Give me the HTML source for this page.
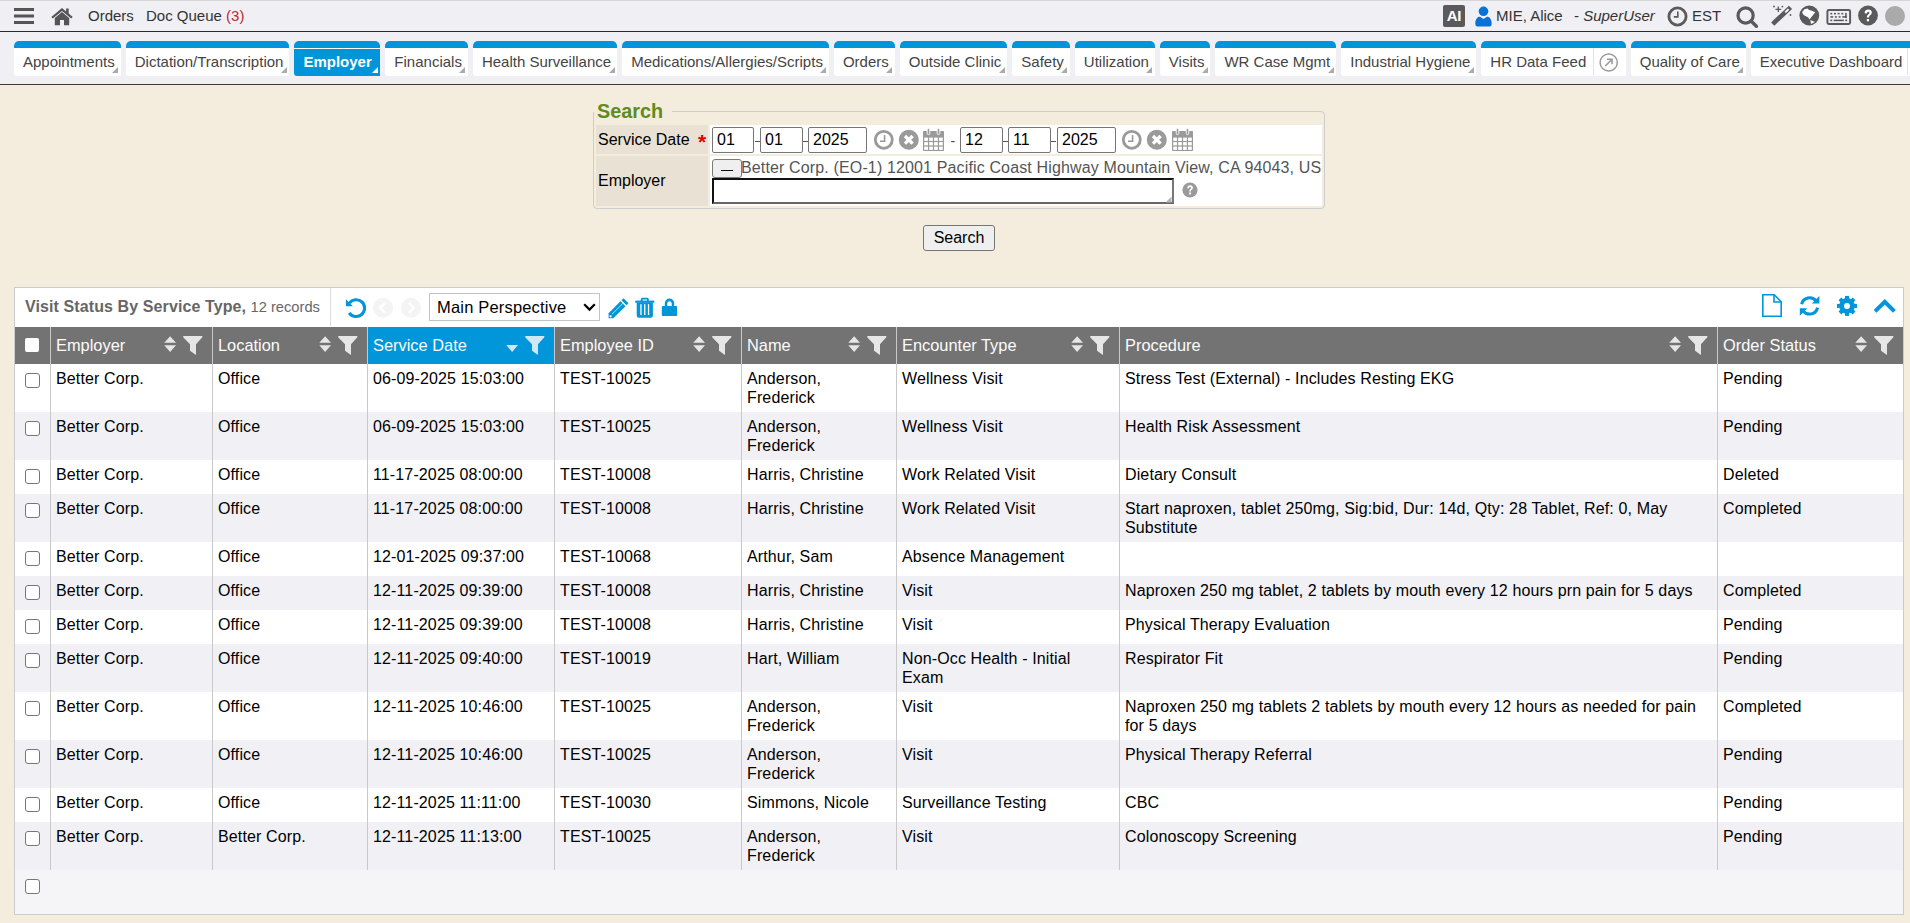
<!DOCTYPE html>
<html><head><meta charset="utf-8">
<style>
*{box-sizing:border-box}
html,body{margin:0;padding:0}
body{width:1910px;height:923px;overflow:hidden;position:relative;background:#f4ecdd;font-family:"Liberation Sans",sans-serif;color:#000}
.abs{position:absolute}
#topbar{position:absolute;left:0;top:0;width:1910px;height:32px;background:#efeff4;border-top:1px solid #d6d6d6;border-bottom:1px solid #2a2a2a}
#tabbar{position:absolute;left:0;top:32px;width:1910px;height:53px;background:#efeff4;border-bottom:1px solid #3a3a3a}
.tt{position:absolute;top:6px;font-size:15px;color:#333;white-space:nowrap;line-height:17px}
#tabs{position:absolute;left:14px;top:9px;display:flex;gap:5px;white-space:nowrap}
.tab{position:relative;height:35px;background:#fff;border-top:7px solid #0095d9;border-radius:5px 5px 0 3px;padding:0 6px 0 9px;font-size:15px;line-height:17px;color:#444;}
.tab{display:flex;align-items:flex-start}.tab>span{position:relative;top:5px;display:block}
.tab:after{content:"";position:absolute;right:2.5px;bottom:3px;width:0;height:0;border-left:6.5px solid transparent;border-bottom:6.5px solid #aaa}
.tab.act{background:#0095d9;color:#fff;font-weight:bold;padding-right:8.6px;box-shadow:inset 0 1px 0 #fff}
.tab.act:after{border-bottom-color:#fff}
.tab.noa:after{display:none}
.lbl{font-size:16px;line-height:19px;color:#000;white-space:nowrap}
.din{position:absolute;top:127px;height:26px;background:#fff;border:1px solid #767676;border-radius:2px;font-size:16px;line-height:24px;padding-left:4px}
.gtitle{font-size:16px;line-height:19px;color:#666;white-space:nowrap}
.hd{font-size:16.4px;line-height:19px;color:#fbfbfb;white-space:nowrap}
.cell{font-size:16px;line-height:19px;color:#000;white-space:nowrap;letter-spacing:0.13px}
.cb{width:15px;height:15px;border:1px solid #767676;border-radius:3px;background:#fff}
.dsh{position:absolute;top:130px;font-size:14px;line-height:19px;color:#aaa}
</style></head><body>
<div id="topbar">
  <svg class="abs" style="left:14px;top:7px" width="20" height="17" viewBox="0 0 20 17"><rect x="0" y="0" width="20" height="3" fill="#555"/><rect x="0" y="6.5" width="20" height="3" fill="#555"/><rect x="0" y="13" width="20" height="3" fill="#555"/></svg>
  <svg class="abs" style="left:50.5px;top:5.5px" width="22" height="19" viewBox="0 0 22 19"><path d="M11 1 L0.3 10 L1.8 11.6 L11 3.9 L20.2 11.6 L21.7 10 L17.7 6.6 L17.7 1.5 L15.1 1.5 L15.1 4.4 Z" fill="#555"/><path d="M3.8 11 L11 5 L18.2 11 L18.2 18.3 L13 18.3 L13 13 L9 13 L9 18.3 L3.8 18.3 Z" fill="#555"/></svg>
  <div class="tt" style="left:88px">Orders</div>
  <div class="tt" style="left:146px">Doc Queue <span style="color:#c62828">(3)</span></div>
  <div class="abs" style="left:1443px;top:4px;width:22px;height:22px;background:#5a5a5a;border-radius:2px;color:#fff;font-weight:bold;font-size:15px;line-height:22px;text-align:center;letter-spacing:-0.3px">AI</div>
  <svg class="abs" style="left:1475px;top:5px" width="17" height="21" viewBox="0 0 17 21"><circle cx="8.5" cy="5.3" r="4.8" fill="#0a72d6"/><path d="M0.3 18 C0.3 12.5 3 10.8 5 10.8 L8.5 13 L12 10.8 C14 10.8 16.7 12.5 16.7 18 Q16.7 20.5 14.5 20.5 L2.5 20.5 Q0.3 20.5 0.3 18 Z" fill="#0a72d6"/></svg>
  <div class="tt" style="left:1496px">MIE, Alice</div>
  <div class="tt" style="left:1574px">- <i>SuperUser</i></div>
  <svg class="abs" style="left:1667px;top:4.5px" width="21" height="21" viewBox="0 0 21 21"><circle cx="10.5" cy="10.5" r="8.6" fill="none" stroke="#5a5a5a" stroke-width="2.8"/><path d="M10.8 5.6 V10.9 H6.8" fill="none" stroke="#5a5a5a" stroke-width="1.6"/></svg>
  <div class="tt" style="left:1692px;top:5.5px">EST</div>
  <svg class="abs" style="left:1735.5px;top:5px" width="24" height="23" viewBox="0 0 24 23"><circle cx="9.6" cy="9.5" r="7.6" fill="none" stroke="#5a5a5a" stroke-width="3.2"/><path d="M15 15 L20.4 20.3" stroke="#5a5a5a" stroke-width="3.4" stroke-linecap="round"/></svg>
  <svg class="abs" style="left:1771px;top:3px" width="23" height="23" viewBox="0 0 23 23"><path d="M3.4 18.5 L17.8 4.9" stroke="#5a5a5a" stroke-width="4.6" stroke-linecap="square"/><path d="M14.3 8.4 L17.6 5.1" stroke="#fff" stroke-width="2"/><path d="M7.3 2.6 V8 M4.5 5.3 H10.1" stroke="#5a5a5a" stroke-width="1.3"/><circle cx="3" cy="2.5" r="0.9" fill="#5a5a5a"/><circle cx="11.4" cy="2.6" r="0.9" fill="#5a5a5a"/><circle cx="19.5" cy="11" r="0.9" fill="#5a5a5a"/></svg>
  <svg class="abs" style="left:1799px;top:4.3px" width="21" height="21" viewBox="0 0 21 21"><circle cx="10.3" cy="10.5" r="9.9" fill="#5a5a5a"/><path d="M3.2 7 L5.5 4.2 L8.5 3.5 L10 4.9 L12.2 5.5 L16.2 7.2 L14.5 9.4 L12.5 12 L10.4 14.6 L9.3 12.6 L7.5 11.4 L5 10.3 L3.7 8.8 Z" fill="#fff"/><path d="M11.4 15 L16 17 L12 19 Z" fill="#fff"/></svg>
  <svg class="abs" style="left:1826px;top:7.5px" width="26" height="17" viewBox="0 0 26 17.6"><rect x="1" y="1" width="23.5" height="14.5" rx="1.5" fill="none" stroke="#5a5a5a" stroke-width="2"/><g fill="#5a5a5a"><rect x="4" y="4" width="2" height="1.6"/><rect x="7.8" y="4" width="2" height="1.6"/><rect x="11.6" y="4" width="2" height="1.6"/><rect x="15.4" y="4" width="2" height="1.6"/><rect x="19.4" y="4" width="1.6" height="5.4"/><rect x="4" y="7.4" width="3" height="1.6"/><rect x="8.8" y="7.4" width="2" height="1.6"/><rect x="12.6" y="7.4" width="2" height="1.6"/><rect x="16.4" y="7.4" width="4.6" height="1.6"/><rect x="4" y="11" width="2" height="1.6"/><rect x="7.5" y="11" width="10.5" height="1.6"/><rect x="19.4" y="11" width="2" height="1.6"/></g></svg>
  <svg class="abs" style="left:1858px;top:4.3px" width="21" height="21" viewBox="0 0 21 21"><circle cx="10" cy="10.5" r="9.9" fill="#5a5a5a"/><path d="M6.6 8.2 Q6.6 4.6 10.2 4.6 Q13.8 4.6 13.8 7.8 Q13.8 9.6 11.8 10.6 Q11 11.1 11 12.6 L8.8 12.6 Q8.8 10.2 10.4 9.3 Q11.5 8.7 11.4 7.8 Q11.3 6.8 10.2 6.8 Q9 6.8 8.9 8.4 Z" fill="#fff"/><rect x="8.8" y="14" width="2.3" height="2.3" fill="#fff"/></svg>
  <div class="abs" style="left:1885px;top:5px;width:20px;height:20px;border-radius:50%;background:#aaaaaa"></div>
</div>
<div id="tabbar">
  <div id="tabs">
    <div class="tab"><span>Appointments</span></div>
    <div class="tab"><span>Dictation/Transcription</span></div>
    <div class="tab act"><span>Employer</span></div>
    <div class="tab"><span>Financials</span></div>
    <div class="tab"><span>Health Surveillance</span></div>
    <div class="tab"><span>Medications/Allergies/Scripts</span></div>
    <div class="tab"><span>Orders</span></div>
    <div class="tab"><span>Outside Clinic</span></div>
    <div class="tab"><span>Safety</span></div>
    <div class="tab"><span>Utilization</span></div>
    <div class="tab"><span>Visits</span></div>
    <div class="tab"><span>WR Case Mgmt</span></div>
    <div class="tab"><span>Industrial Hygiene</span></div>
    <div class="tab noa" style="padding-right:0"><span>HR Data Feed</span><span style="display:inline-block;width:1px;height:27px;background:#e3e3e3;vertical-align:top;top:0;margin-left:6.5px"></span><span style="display:inline-block;width:32px;position:relative;top:0;height:27px"><svg style="position:absolute;left:5px;top:4.5px" width="20" height="19" viewBox="0 0 20 19"><circle cx="9.7" cy="9.5" r="8.6" fill="none" stroke="#9a9a9a" stroke-width="1.5"/><path d="M6.3 13 L13 6.3 M8 6.3 H13 V11.3" fill="none" stroke="#9a9a9a" stroke-width="1.6"/></svg></span></div>
    <div class="tab"><span>Quality of Care</span></div>
    <div class="tab noa" style="padding-right:0"><span>Executive Dashboard</span><span style="display:inline-block;width:1px;height:27px;background:#e3e3e3;vertical-align:top;top:0;margin-left:5px"></span><span style="display:inline-block;width:33px"></span></div>
  </div>
</div>
<!-- search panel -->
<div class="abs" style="left:593px;top:111px;width:732px;height:98px;border:1px solid #cdcdcd;border-radius:0 4px 4px 4px"></div>
<div class="abs" style="left:592px;top:108px;width:80px;height:4px;background:#f4ecdd"></div>
<div class="abs" style="left:597px;top:99px;font-size:19.8px;font-weight:bold;color:#5f8b1f;line-height:24px">Search</div>
<div class="abs" style="left:596px;top:125px;width:112px;height:29px;background:#e9e2d4"></div>
<div class="abs" style="left:710px;top:125px;width:612px;height:29px;background:#fff"></div>
<div class="abs" style="left:596px;top:156px;width:112px;height:50px;background:#e9e2d4"></div>
<div class="abs" style="left:710px;top:156px;width:612px;height:50px;background:#fff"></div>
<div class="lbl abs" style="left:598px;top:130px">Service Date</div>
<div class="abs" style="left:698px;top:131px;color:#e00000;font-size:21px;font-weight:bold;line-height:21px">*</div>
<div class="lbl abs" style="left:598px;top:171px">Employer</div>
<div class="din" style="left:712px;width:42px">01</div>
<div class="abs" style="left:755px;top:141px;width:5px;height:1px;background:#5a5a5a"></div>
<div class="din" style="left:760px;width:43px">01</div>
<div class="abs" style="left:803px;top:141px;width:5px;height:1px;background:#5a5a5a"></div>
<div class="din" style="left:808px;width:59px">2025</div>
<svg class="abs" style="left:873px;top:129px" width="22" height="22" viewBox="0 0 22 22"><circle cx="10.8" cy="10.8" r="8.5" fill="none" stroke="#9a9a9a" stroke-width="2.8"/><path d="M11.6 6 V12.3 H7" fill="none" stroke="#9a9a9a" stroke-width="1.6"/></svg>
<svg class="abs" style="left:898px;top:129px" width="22" height="22" viewBox="0 0 22 22"><circle cx="10.8" cy="10.8" r="10" fill="#9a9a9a"/><path d="M7 7 L14.6 14.6 M14.6 7 L7 14.6" stroke="#fff" stroke-width="3.4"/></svg>
<svg class="abs" style="left:922px;top:128px" width="23" height="23" viewBox="0 0 23 23"><rect x="1" y="3" width="21" height="20" rx="0.8" fill="#9a9a9a"/><g fill="#fff"><rect x="2.2" y="9.6" width="3.75" height="3.3"/><rect x="2.2" y="14.1" width="3.75" height="3.3"/><rect x="2.2" y="18.6" width="3.75" height="3.3"/><rect x="7.15" y="9.6" width="3.75" height="3.3"/><rect x="7.15" y="14.1" width="3.75" height="3.3"/><rect x="7.15" y="18.6" width="3.75" height="3.3"/><rect x="12.1" y="9.6" width="3.75" height="3.3"/><rect x="12.1" y="14.1" width="3.75" height="3.3"/><rect x="12.1" y="18.6" width="3.75" height="3.3"/><rect x="17.05" y="9.6" width="3.75" height="3.3"/><rect x="17.05" y="14.1" width="3.75" height="3.3"/><rect x="17.05" y="18.6" width="3.75" height="3.3"/></g><rect x="5.2" y="0.4" width="2.6" height="6.2" rx="1.3" fill="#9a9a9a" stroke="#fff" stroke-width="0.9"/><rect x="15.2" y="0.4" width="2.6" height="6.2" rx="1.3" fill="#9a9a9a" stroke="#fff" stroke-width="0.9"/></svg>
<div class="dsh" style="left:950.5px;top:132px;color:#444">-</div>
<div class="din" style="left:960px;width:43px">12</div>
<div class="abs" style="left:1003px;top:141px;width:5px;height:1px;background:#5a5a5a"></div>
<div class="din" style="left:1008px;width:43px">11</div>
<div class="abs" style="left:1051px;top:141px;width:5px;height:1px;background:#5a5a5a"></div>
<div class="din" style="left:1057px;width:59px">2025</div>
<svg class="abs" style="left:1121px;top:129px" width="22" height="22" viewBox="0 0 22 22"><circle cx="10.8" cy="10.8" r="8.5" fill="none" stroke="#9a9a9a" stroke-width="2.8"/><path d="M11.6 6 V12.3 H7" fill="none" stroke="#9a9a9a" stroke-width="1.6"/></svg>
<svg class="abs" style="left:1146px;top:129px" width="22" height="22" viewBox="0 0 22 22"><circle cx="10.8" cy="10.8" r="10" fill="#9a9a9a"/><path d="M7 7 L14.6 14.6 M14.6 7 L7 14.6" stroke="#fff" stroke-width="3.4"/></svg>
<svg class="abs" style="left:1171px;top:128px" width="23" height="23" viewBox="0 0 23 23"><rect x="1" y="3" width="21" height="20" rx="0.8" fill="#9a9a9a"/><g fill="#fff"><rect x="2.2" y="9.6" width="3.75" height="3.3"/><rect x="2.2" y="14.1" width="3.75" height="3.3"/><rect x="2.2" y="18.6" width="3.75" height="3.3"/><rect x="7.15" y="9.6" width="3.75" height="3.3"/><rect x="7.15" y="14.1" width="3.75" height="3.3"/><rect x="7.15" y="18.6" width="3.75" height="3.3"/><rect x="12.1" y="9.6" width="3.75" height="3.3"/><rect x="12.1" y="14.1" width="3.75" height="3.3"/><rect x="12.1" y="18.6" width="3.75" height="3.3"/><rect x="17.05" y="9.6" width="3.75" height="3.3"/><rect x="17.05" y="14.1" width="3.75" height="3.3"/><rect x="17.05" y="18.6" width="3.75" height="3.3"/></g><rect x="5.2" y="0.4" width="2.6" height="6.2" rx="1.3" fill="#9a9a9a" stroke="#fff" stroke-width="0.9"/><rect x="15.2" y="0.4" width="2.6" height="6.2" rx="1.3" fill="#9a9a9a" stroke="#fff" stroke-width="0.9"/></svg>
<div class="abs" style="left:712px;top:159px;width:30px;height:19px;background:#efefef;border:1px solid #7a7a7a;border-radius:3px"><div style="position:absolute;left:8px;top:10px;width:12px;height:1.4px;background:#111"></div></div>
<div class="abs" style="left:741px;top:157.5px;font-size:16px;line-height:19px;color:#555;letter-spacing:0.14px;white-space:nowrap">Better Corp. (EO-1) 12001 Pacific Coast Highway Mountain View, CA 94043, US</div>
<div class="abs" style="left:712px;top:178px;width:462px;height:26px;background:#fff;border:2px solid #111;border-right-color:#777;border-bottom-color:#666"></div>
<svg class="abs" style="left:1164.5px;top:195.5px" width="7" height="7" viewBox="0 0 7 7"><path d="M6.5 0.5 L6.5 6.5 L0.5 6.5 Z" fill="#b5b5b5"/></svg>
<svg class="abs" style="left:1182px;top:182px" width="17" height="16" viewBox="0 0 17 16"><circle cx="8" cy="8" r="7.6" fill="#9a9a9a"/><path d="M5.3 6.3 Q5.3 3.3 8.1 3.3 Q10.9 3.3 10.9 5.8 Q10.9 7.2 9.4 8 Q8.9 8.4 8.9 9.4 L7.2 9.4 Q7.2 7.6 8.3 7 Q9.1 6.5 9.1 5.8 Q9 5 8.1 5 Q7.1 5 7 6.4 Z" fill="#fff"/><rect x="7.1" y="10.5" width="1.9" height="1.9" fill="#fff"/></svg>
<div class="abs" style="left:923px;top:225px;width:72px;height:26px;background:#efefef;border:1px solid #767676;border-radius:3px;font-size:16px;line-height:24px;text-align:center">Search</div>
<!-- GRID -->
<div class="abs" style="left:14px;top:287px;width:1890px;height:628px;background:#fff;border:1px solid #cbcbcb"></div>
<div class="abs gtitle" style="left:25px;top:297px"><b style="letter-spacing:0.1px">Visit Status By Service Type,</b> <span style="font-size:14.7px">12 records</span></div>
<div class="abs" style="left:330px;top:288px;width:1px;height:38px;background:#dcdcdc"></div>
<div class="abs" style="left:15px;top:327px;width:1888px;height:37px;background:#737373"></div>
<div class="abs" style="left:368px;top:327px;width:186px;height:37px;background:#0096d9"></div>
<div class="abs" style="left:25px;top:338px;width:14px;height:14px;background:#fff;border-radius:2px"></div>
<div class="abs" style="left:50px;top:327px;width:1px;height:37px;background:#c9c9c9"></div>
<div class="abs hd" style="left:56px;top:336px">Employer</div>
<svg class="abs" style="left:182.5px;top:336px" width="20" height="20" viewBox="0 0 20 20"><path d="M0.6 0 H19 Q19.8 0.6 19.1 1.6 L13 8.3 V19 L7 14.8 V8.3 L0.4 1.6 Q-0.2 0.6 0.6 0 Z" fill="#e6e6e6"/></svg>
<svg class="abs" style="left:164.1px;top:336px" width="13" height="17" viewBox="0 0 13 17"><path d="M0.3 6.8 L6.15 0.3 L12 6.8 Z M0.3 9.2 H12 L6.15 16 Z" fill="#e6e6e6"/></svg>
<div class="abs" style="left:212px;top:327px;width:1px;height:37px;background:#c9c9c9"></div>
<div class="abs hd" style="left:218px;top:336px">Location</div>
<svg class="abs" style="left:337.5px;top:336px" width="20" height="20" viewBox="0 0 20 20"><path d="M0.6 0 H19 Q19.8 0.6 19.1 1.6 L13 8.3 V19 L7 14.8 V8.3 L0.4 1.6 Q-0.2 0.6 0.6 0 Z" fill="#e6e6e6"/></svg>
<svg class="abs" style="left:319.1px;top:336px" width="13" height="17" viewBox="0 0 13 17"><path d="M0.3 6.8 L6.15 0.3 L12 6.8 Z M0.3 9.2 H12 L6.15 16 Z" fill="#e6e6e6"/></svg>
<div class="abs" style="left:367px;top:327px;width:1px;height:37px;background:#c9c9c9"></div>
<div class="abs hd" style="left:373px;top:336px">Service Date</div>
<svg class="abs" style="left:524.5px;top:336px" width="20" height="20" viewBox="0 0 20 20"><path d="M0.6 0 H19 Q19.8 0.6 19.1 1.6 L13 8.3 V19 L7 14.8 V8.3 L0.4 1.6 Q-0.2 0.6 0.6 0 Z" fill="#cfe8f5"/></svg>
<svg class="abs" style="left:506.1px;top:336px" width="13" height="17" viewBox="0 0 13 17"><path d="M0.3 9 H12 L6.15 16 Z" fill="#cfe8f5"/></svg>
<div class="abs" style="left:554px;top:327px;width:1px;height:37px;background:#c9c9c9"></div>
<div class="abs hd" style="left:560px;top:336px">Employee ID</div>
<svg class="abs" style="left:711.5px;top:336px" width="20" height="20" viewBox="0 0 20 20"><path d="M0.6 0 H19 Q19.8 0.6 19.1 1.6 L13 8.3 V19 L7 14.8 V8.3 L0.4 1.6 Q-0.2 0.6 0.6 0 Z" fill="#e6e6e6"/></svg>
<svg class="abs" style="left:693.1px;top:336px" width="13" height="17" viewBox="0 0 13 17"><path d="M0.3 6.8 L6.15 0.3 L12 6.8 Z M0.3 9.2 H12 L6.15 16 Z" fill="#e6e6e6"/></svg>
<div class="abs" style="left:741px;top:327px;width:1px;height:37px;background:#c9c9c9"></div>
<div class="abs hd" style="left:747px;top:336px">Name</div>
<svg class="abs" style="left:866.5px;top:336px" width="20" height="20" viewBox="0 0 20 20"><path d="M0.6 0 H19 Q19.8 0.6 19.1 1.6 L13 8.3 V19 L7 14.8 V8.3 L0.4 1.6 Q-0.2 0.6 0.6 0 Z" fill="#e6e6e6"/></svg>
<svg class="abs" style="left:848.1px;top:336px" width="13" height="17" viewBox="0 0 13 17"><path d="M0.3 6.8 L6.15 0.3 L12 6.8 Z M0.3 9.2 H12 L6.15 16 Z" fill="#e6e6e6"/></svg>
<div class="abs" style="left:896px;top:327px;width:1px;height:37px;background:#c9c9c9"></div>
<div class="abs hd" style="left:902px;top:336px">Encounter Type</div>
<svg class="abs" style="left:1089.5px;top:336px" width="20" height="20" viewBox="0 0 20 20"><path d="M0.6 0 H19 Q19.8 0.6 19.1 1.6 L13 8.3 V19 L7 14.8 V8.3 L0.4 1.6 Q-0.2 0.6 0.6 0 Z" fill="#e6e6e6"/></svg>
<svg class="abs" style="left:1071.1px;top:336px" width="13" height="17" viewBox="0 0 13 17"><path d="M0.3 6.8 L6.15 0.3 L12 6.8 Z M0.3 9.2 H12 L6.15 16 Z" fill="#e6e6e6"/></svg>
<div class="abs" style="left:1119px;top:327px;width:1px;height:37px;background:#c9c9c9"></div>
<div class="abs hd" style="left:1125px;top:336px">Procedure</div>
<svg class="abs" style="left:1687.5px;top:336px" width="20" height="20" viewBox="0 0 20 20"><path d="M0.6 0 H19 Q19.8 0.6 19.1 1.6 L13 8.3 V19 L7 14.8 V8.3 L0.4 1.6 Q-0.2 0.6 0.6 0 Z" fill="#e6e6e6"/></svg>
<svg class="abs" style="left:1669.1px;top:336px" width="13" height="17" viewBox="0 0 13 17"><path d="M0.3 6.8 L6.15 0.3 L12 6.8 Z M0.3 9.2 H12 L6.15 16 Z" fill="#e6e6e6"/></svg>
<div class="abs" style="left:1717px;top:327px;width:1px;height:37px;background:#c9c9c9"></div>
<div class="abs hd" style="left:1723px;top:336px">Order Status</div>
<svg class="abs" style="left:1873.5px;top:336px" width="20" height="20" viewBox="0 0 20 20"><path d="M0.6 0 H19 Q19.8 0.6 19.1 1.6 L13 8.3 V19 L7 14.8 V8.3 L0.4 1.6 Q-0.2 0.6 0.6 0 Z" fill="#e6e6e6"/></svg>
<svg class="abs" style="left:1855.1px;top:336px" width="13" height="17" viewBox="0 0 13 17"><path d="M0.3 6.8 L6.15 0.3 L12 6.8 Z M0.3 9.2 H12 L6.15 16 Z" fill="#e6e6e6"/></svg>
<div class="abs" style="left:15px;top:364px;width:1888px;height:48px;background:#ffffff"></div>
<div class="abs cb" style="left:25px;top:373px"></div>
<div class="abs cell" style="left:56px;top:369px">Better Corp.</div>
<div class="abs cell" style="left:218px;top:369px">Office</div>
<div class="abs cell" style="left:373px;top:369px">06-09-2025 15:03:00</div>
<div class="abs cell" style="left:560px;top:369px">TEST-10025</div>
<div class="abs cell" style="left:747px;top:369px">Anderson,<br>Frederick</div>
<div class="abs cell" style="left:902px;top:369px">Wellness Visit</div>
<div class="abs cell" style="left:1125px;top:369px">Stress Test (External) - Includes Resting EKG</div>
<div class="abs cell" style="left:1723px;top:369px">Pending</div>
<div class="abs" style="left:15px;top:412px;width:1888px;height:48px;background:#f0f0f5"></div>
<div class="abs cb" style="left:25px;top:421px"></div>
<div class="abs cell" style="left:56px;top:417px">Better Corp.</div>
<div class="abs cell" style="left:218px;top:417px">Office</div>
<div class="abs cell" style="left:373px;top:417px">06-09-2025 15:03:00</div>
<div class="abs cell" style="left:560px;top:417px">TEST-10025</div>
<div class="abs cell" style="left:747px;top:417px">Anderson,<br>Frederick</div>
<div class="abs cell" style="left:902px;top:417px">Wellness Visit</div>
<div class="abs cell" style="left:1125px;top:417px">Health Risk Assessment</div>
<div class="abs cell" style="left:1723px;top:417px">Pending</div>
<div class="abs" style="left:15px;top:460px;width:1888px;height:34px;background:#ffffff"></div>
<div class="abs cb" style="left:25px;top:469px"></div>
<div class="abs cell" style="left:56px;top:465px">Better Corp.</div>
<div class="abs cell" style="left:218px;top:465px">Office</div>
<div class="abs cell" style="left:373px;top:465px">11-17-2025 08:00:00</div>
<div class="abs cell" style="left:560px;top:465px">TEST-10008</div>
<div class="abs cell" style="left:747px;top:465px">Harris, Christine</div>
<div class="abs cell" style="left:902px;top:465px">Work Related Visit</div>
<div class="abs cell" style="left:1125px;top:465px">Dietary Consult</div>
<div class="abs cell" style="left:1723px;top:465px">Deleted</div>
<div class="abs" style="left:15px;top:494px;width:1888px;height:48px;background:#f0f0f5"></div>
<div class="abs cb" style="left:25px;top:503px"></div>
<div class="abs cell" style="left:56px;top:499px">Better Corp.</div>
<div class="abs cell" style="left:218px;top:499px">Office</div>
<div class="abs cell" style="left:373px;top:499px">11-17-2025 08:00:00</div>
<div class="abs cell" style="left:560px;top:499px">TEST-10008</div>
<div class="abs cell" style="left:747px;top:499px">Harris, Christine</div>
<div class="abs cell" style="left:902px;top:499px">Work Related Visit</div>
<div class="abs cell" style="left:1125px;top:499px">Start naproxen, tablet 250mg, Sig:bid, Dur: 14d, Qty: 28 Tablet, Ref: 0, May<br>Substitute</div>
<div class="abs cell" style="left:1723px;top:499px">Completed</div>
<div class="abs" style="left:15px;top:542px;width:1888px;height:34px;background:#ffffff"></div>
<div class="abs cb" style="left:25px;top:551px"></div>
<div class="abs cell" style="left:56px;top:547px">Better Corp.</div>
<div class="abs cell" style="left:218px;top:547px">Office</div>
<div class="abs cell" style="left:373px;top:547px">12-01-2025 09:37:00</div>
<div class="abs cell" style="left:560px;top:547px">TEST-10068</div>
<div class="abs cell" style="left:747px;top:547px">Arthur, Sam</div>
<div class="abs cell" style="left:902px;top:547px">Absence Management</div>
<div class="abs cell" style="left:1125px;top:547px"></div>
<div class="abs cell" style="left:1723px;top:547px"></div>
<div class="abs" style="left:15px;top:576px;width:1888px;height:34px;background:#f0f0f5"></div>
<div class="abs cb" style="left:25px;top:585px"></div>
<div class="abs cell" style="left:56px;top:581px">Better Corp.</div>
<div class="abs cell" style="left:218px;top:581px">Office</div>
<div class="abs cell" style="left:373px;top:581px">12-11-2025 09:39:00</div>
<div class="abs cell" style="left:560px;top:581px">TEST-10008</div>
<div class="abs cell" style="left:747px;top:581px">Harris, Christine</div>
<div class="abs cell" style="left:902px;top:581px">Visit</div>
<div class="abs cell" style="left:1125px;top:581px">Naproxen 250 mg tablet, 2 tablets by mouth every 12 hours prn pain for 5 days</div>
<div class="abs cell" style="left:1723px;top:581px">Completed</div>
<div class="abs" style="left:15px;top:610px;width:1888px;height:34px;background:#ffffff"></div>
<div class="abs cb" style="left:25px;top:619px"></div>
<div class="abs cell" style="left:56px;top:615px">Better Corp.</div>
<div class="abs cell" style="left:218px;top:615px">Office</div>
<div class="abs cell" style="left:373px;top:615px">12-11-2025 09:39:00</div>
<div class="abs cell" style="left:560px;top:615px">TEST-10008</div>
<div class="abs cell" style="left:747px;top:615px">Harris, Christine</div>
<div class="abs cell" style="left:902px;top:615px">Visit</div>
<div class="abs cell" style="left:1125px;top:615px">Physical Therapy Evaluation</div>
<div class="abs cell" style="left:1723px;top:615px">Pending</div>
<div class="abs" style="left:15px;top:644px;width:1888px;height:48px;background:#f0f0f5"></div>
<div class="abs cb" style="left:25px;top:653px"></div>
<div class="abs cell" style="left:56px;top:649px">Better Corp.</div>
<div class="abs cell" style="left:218px;top:649px">Office</div>
<div class="abs cell" style="left:373px;top:649px">12-11-2025 09:40:00</div>
<div class="abs cell" style="left:560px;top:649px">TEST-10019</div>
<div class="abs cell" style="left:747px;top:649px">Hart, William</div>
<div class="abs cell" style="left:902px;top:649px">Non-Occ Health - Initial<br>Exam</div>
<div class="abs cell" style="left:1125px;top:649px">Respirator Fit</div>
<div class="abs cell" style="left:1723px;top:649px">Pending</div>
<div class="abs" style="left:15px;top:692px;width:1888px;height:48px;background:#ffffff"></div>
<div class="abs cb" style="left:25px;top:701px"></div>
<div class="abs cell" style="left:56px;top:697px">Better Corp.</div>
<div class="abs cell" style="left:218px;top:697px">Office</div>
<div class="abs cell" style="left:373px;top:697px">12-11-2025 10:46:00</div>
<div class="abs cell" style="left:560px;top:697px">TEST-10025</div>
<div class="abs cell" style="left:747px;top:697px">Anderson,<br>Frederick</div>
<div class="abs cell" style="left:902px;top:697px">Visit</div>
<div class="abs cell" style="left:1125px;top:697px">Naproxen 250 mg tablets 2 tablets by mouth every 12 hours as needed for pain<br>for 5 days</div>
<div class="abs cell" style="left:1723px;top:697px">Completed</div>
<div class="abs" style="left:15px;top:740px;width:1888px;height:48px;background:#f0f0f5"></div>
<div class="abs cb" style="left:25px;top:749px"></div>
<div class="abs cell" style="left:56px;top:745px">Better Corp.</div>
<div class="abs cell" style="left:218px;top:745px">Office</div>
<div class="abs cell" style="left:373px;top:745px">12-11-2025 10:46:00</div>
<div class="abs cell" style="left:560px;top:745px">TEST-10025</div>
<div class="abs cell" style="left:747px;top:745px">Anderson,<br>Frederick</div>
<div class="abs cell" style="left:902px;top:745px">Visit</div>
<div class="abs cell" style="left:1125px;top:745px">Physical Therapy Referral</div>
<div class="abs cell" style="left:1723px;top:745px">Pending</div>
<div class="abs" style="left:15px;top:788px;width:1888px;height:34px;background:#ffffff"></div>
<div class="abs cb" style="left:25px;top:797px"></div>
<div class="abs cell" style="left:56px;top:793px">Better Corp.</div>
<div class="abs cell" style="left:218px;top:793px">Office</div>
<div class="abs cell" style="left:373px;top:793px">12-11-2025 11:11:00</div>
<div class="abs cell" style="left:560px;top:793px">TEST-10030</div>
<div class="abs cell" style="left:747px;top:793px">Simmons, Nicole</div>
<div class="abs cell" style="left:902px;top:793px">Surveillance Testing</div>
<div class="abs cell" style="left:1125px;top:793px">CBC</div>
<div class="abs cell" style="left:1723px;top:793px">Pending</div>
<div class="abs" style="left:15px;top:822px;width:1888px;height:48px;background:#f0f0f5"></div>
<div class="abs cb" style="left:25px;top:831px"></div>
<div class="abs cell" style="left:56px;top:827px">Better Corp.</div>
<div class="abs cell" style="left:218px;top:827px">Better Corp.</div>
<div class="abs cell" style="left:373px;top:827px">12-11-2025 11:13:00</div>
<div class="abs cell" style="left:560px;top:827px">TEST-10025</div>
<div class="abs cell" style="left:747px;top:827px">Anderson,<br>Frederick</div>
<div class="abs cell" style="left:902px;top:827px">Visit</div>
<div class="abs cell" style="left:1125px;top:827px">Colonoscopy Screening</div>
<div class="abs cell" style="left:1723px;top:827px">Pending</div>
<div class="abs" style="left:50px;top:364px;width:1px;height:506px;background:#c9c9c9"></div>
<div class="abs" style="left:212px;top:364px;width:1px;height:506px;background:#c9c9c9"></div>
<div class="abs" style="left:367px;top:364px;width:1px;height:506px;background:#c9c9c9"></div>
<div class="abs" style="left:554px;top:364px;width:1px;height:506px;background:#c9c9c9"></div>
<div class="abs" style="left:741px;top:364px;width:1px;height:506px;background:#c9c9c9"></div>
<div class="abs" style="left:896px;top:364px;width:1px;height:506px;background:#c9c9c9"></div>
<div class="abs" style="left:1119px;top:364px;width:1px;height:506px;background:#c9c9c9"></div>
<div class="abs" style="left:1717px;top:364px;width:1px;height:506px;background:#c9c9c9"></div>
<div class="abs" style="left:15px;top:870px;width:1888px;height:44px;background:#f5f5f8"></div>
<div class="abs cb" style="left:25px;top:879px"></div>
<svg class="abs" style="left:345px;top:296.5px" width="22" height="22" viewBox="0 0 22 22"><path d="M4.4 6.2 A8.4 8.4 0 1 1 4.2 15.8" fill="none" stroke="#0096d9" stroke-width="3.1"/><path d="M0.9 2.2 L0.9 9.2 L7.9 9.2 Z" fill="#0096d9"/></svg>
<svg class="abs" style="left:372px;top:297px" width="22" height="22" viewBox="0 0 22 22"><circle cx="11" cy="10.8" r="10" fill="#f4f4f4"/><path d="M13 5.8 L8.2 10.8 L13 15.8" fill="none" stroke="#fff" stroke-width="2.4"/></svg>
<svg class="abs" style="left:400px;top:297px" width="22" height="22" viewBox="0 0 22 22"><circle cx="11" cy="10.8" r="10" fill="#f4f4f4"/><path d="M9 5.8 L13.8 10.8 L9 15.8" fill="none" stroke="#fff" stroke-width="2.4"/></svg>
<div class="abs" style="left:429px;top:293px;width:171px;height:28px;border:1px solid #c3c3c3;background:#fff;font-size:16.5px;line-height:27px;padding-left:7px;letter-spacing:0.18px;white-space:nowrap">Main Perspective</div>
<svg class="abs" style="left:582.6px;top:302.6px" width="13" height="9" viewBox="0 0 13 9"><path d="M1.2 1.2 L6.5 6.6 L11.8 1.2" fill="none" stroke="#000" stroke-width="2.2"/></svg>
<svg class="abs" style="left:608px;top:297px" width="22" height="22" viewBox="0 0 22 22"><path d="M15.5 1.3 L20.5 6.3 L18.5 8.3 L13.5 3.3 Z" fill="#0096d9"/><path d="M12.5 4.3 L17.5 9.3 L5.3 21.3 L0.6 21.3 L0.6 16.3 Z" fill="#0096d9"/><path d="M4 17.2 L15.3 6" stroke="#fff" stroke-width="0.7"/><circle cx="2.6" cy="19.3" r="1.1" fill="#fff"/></svg>
<svg class="abs" style="left:635px;top:297px" width="20" height="22" viewBox="0 0 20 22"><path d="M0.3 3.6 H19.3 V5.8 H0.3 Z" fill="#0096d9"/><path d="M5.8 4 V2.3 Q5.8 0.8 7.3 0.8 H12.3 Q13.8 0.8 13.8 2.3 V4 H12 V2.6 H7.6 V4 Z" fill="#0096d9"/><path d="M1.7 5.5 H17.9 V18.6 Q17.9 20.8 15.7 20.8 H3.9 Q1.7 20.8 1.7 18.6 Z" fill="#0096d9"/><g fill="#fff"><rect x="5.3" y="7.2" width="1.3" height="10.8"/><rect x="9.1" y="7.2" width="1.3" height="10.8"/><rect x="12.9" y="7.2" width="1.3" height="10.8"/></g></svg>
<svg class="abs" style="left:661px;top:297px" width="17" height="20" viewBox="0 0 17 20"><path d="M3.8 9 V6.2 A4.7 4.7 0 0 1 13.2 6.2 V9 H10.7 V6.4 A2.2 2.2 0 0 0 6.3 6.4 V9 Z" fill="#0096d9"/><rect x="0.8" y="9" width="15.3" height="10" rx="1" fill="#0096d9"/></svg>
<svg class="abs" style="left:1761px;top:293px" width="22" height="25" viewBox="0 0 22 25"><path d="M1.8 1.8 H13.2 L20.2 8.8 V23.3 H1.8 Z" fill="#fff" stroke="#0096d9" stroke-width="1.6"/><path d="M13 1.8 V9 H20.2" fill="none" stroke="#0096d9" stroke-width="1.6"/></svg>
<svg class="abs" style="left:1799px;top:295px" width="22" height="22" viewBox="0 0 22 22"><path d="M2.6 9.2 A8.2 8.2 0 0 1 17 5.8" fill="none" stroke="#0096d9" stroke-width="3"/><path d="M20.4 1 V8.6 H12.8 Z" fill="#0096d9"/><path d="M18.6 12.6 A8.2 8.2 0 0 1 4.2 16" fill="none" stroke="#0096d9" stroke-width="3"/><path d="M0.8 20.8 V13.2 H8.4 Z" fill="#0096d9"/></svg>
<svg class="abs" style="left:1836px;top:295px" width="22" height="22" viewBox="0 0 22 22"><g fill="#0096d9" transform="translate(11 10.9)"><circle r="7.8"/><rect x="-2" y="-10" width="4" height="20"/><rect x="-10" y="-2" width="20" height="4"/><rect x="-2" y="-10" width="4" height="20" transform="rotate(45)"/><rect x="-2" y="-10" width="4" height="20" transform="rotate(-45)"/></g><circle cx="11" cy="10.9" r="3" fill="#fff"/></svg>
<svg class="abs" style="left:1874px;top:299px" width="22" height="14" viewBox="0 0 22 14"><path d="M2.5 11 L10.8 2.8 L19 11" fill="none" stroke="#0096d9" stroke-width="4" stroke-linecap="square"/></svg>

<!-- /GRID -->
</body></html>
